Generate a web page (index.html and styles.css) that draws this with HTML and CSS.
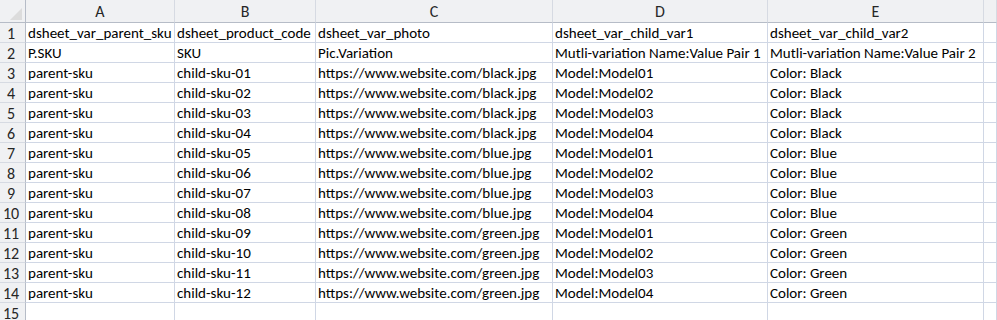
FILE: index.html
```html
<!DOCTYPE html>
<html>
<head>
<meta charset="utf-8">
<link rel="stylesheet" href="styles.css">
</head>
<body>
<div class="sheet">
  <div class="corner"><span class="tri"></span></div>
  <div class="ch">A</div><div class="ch">B</div><div class="ch">C</div><div class="ch">D</div><div class="ch">E</div><div class="ch last"></div>

  <div class="rh">1</div><div class="c">dsheet_var_parent_sku</div><div class="c">dsheet_product_code</div><div class="c">dsheet_var_photo</div><div class="c">dsheet_var_child_var1</div><div class="c">dsheet_var_child_var2</div><div class="c"></div>
  <div class="rh">2</div><div class="c">P.SKU</div><div class="c">SKU</div><div class="c">Pic.Variation</div><div class="c">Mutli-variation Name:Value Pair 1</div><div class="c">Mutli-variation Name:Value Pair 2</div><div class="c"></div>
  <div class="rh">3</div><div class="c">parent-sku</div><div class="c">child-sku-01</div><div class="c">https://www.website.com/black.jpg</div><div class="c">Model:Model01</div><div class="c">Color: Black</div><div class="c"></div>
  <div class="rh">4</div><div class="c">parent-sku</div><div class="c">child-sku-02</div><div class="c">https://www.website.com/black.jpg</div><div class="c">Model:Model02</div><div class="c">Color: Black</div><div class="c"></div>
  <div class="rh">5</div><div class="c">parent-sku</div><div class="c">child-sku-03</div><div class="c">https://www.website.com/black.jpg</div><div class="c">Model:Model03</div><div class="c">Color: Black</div><div class="c"></div>
  <div class="rh">6</div><div class="c">parent-sku</div><div class="c">child-sku-04</div><div class="c">https://www.website.com/black.jpg</div><div class="c">Model:Model04</div><div class="c">Color: Black</div><div class="c"></div>
  <div class="rh">7</div><div class="c">parent-sku</div><div class="c">child-sku-05</div><div class="c">https://www.website.com/blue.jpg</div><div class="c">Model:Model01</div><div class="c">Color: Blue</div><div class="c"></div>
  <div class="rh">8</div><div class="c">parent-sku</div><div class="c">child-sku-06</div><div class="c">https://www.website.com/blue.jpg</div><div class="c">Model:Model02</div><div class="c">Color: Blue</div><div class="c"></div>
  <div class="rh">9</div><div class="c">parent-sku</div><div class="c">child-sku-07</div><div class="c">https://www.website.com/blue.jpg</div><div class="c">Model:Model03</div><div class="c">Color: Blue</div><div class="c"></div>
  <div class="rh">10</div><div class="c">parent-sku</div><div class="c">child-sku-08</div><div class="c">https://www.website.com/blue.jpg</div><div class="c">Model:Model04</div><div class="c">Color: Blue</div><div class="c"></div>
  <div class="rh">11</div><div class="c">parent-sku</div><div class="c">child-sku-09</div><div class="c">https://www.website.com/green.jpg</div><div class="c">Model:Model01</div><div class="c">Color: Green</div><div class="c"></div>
  <div class="rh">12</div><div class="c">parent-sku</div><div class="c">child-sku-10</div><div class="c">https://www.website.com/green.jpg</div><div class="c">Model:Model02</div><div class="c">Color: Green</div><div class="c"></div>
  <div class="rh">13</div><div class="c">parent-sku</div><div class="c">child-sku-11</div><div class="c">https://www.website.com/green.jpg</div><div class="c">Model:Model03</div><div class="c">Color: Green</div><div class="c"></div>
  <div class="rh">14</div><div class="c">parent-sku</div><div class="c">child-sku-12</div><div class="c">https://www.website.com/green.jpg</div><div class="c">Model:Model04</div><div class="c">Color: Green</div><div class="c"></div>
  <div class="rh">15</div><div class="c"></div><div class="c"></div><div class="c"></div><div class="c"></div><div class="c"></div><div class="c"></div>
</div>
</body>
</html>
```
FILE: styles.css
```css
html, body {
  margin: 0;
  padding: 0;
  background: #ffffff;
  overflow: hidden;
}
.sheet {
  display: grid;
  grid-template-columns: 26px 149px 141px 237px 215px 216px 1fr;
  grid-template-rows: 23px repeat(15, 20px);
  width: 997px;
  font-family: Carlito, Lato, "Liberation Sans", sans-serif;
  font-size: 15px;
  color: #000;
}
.sheet > div {
  box-sizing: border-box;
  border-right: 1px solid #d0d7e5;
  border-bottom: 1px solid #d0d7e5;
  white-space: nowrap;
  overflow: hidden;
  display: flex;
  align-items: center;
}
.corner {
  background: #f0f1f3;
  justify-content: flex-end;
  align-items: flex-end !important;
  padding: 0 3px 2px 0;
  border-color: #b6bcc7 !important;
}
.tri {
  width: 0;
  height: 0;
  border-left: 12px solid transparent;
  border-bottom: 12px solid #dcdcdc;
}
.sheet > .ch {
  background: #f0f1f3;
  justify-content: center;
  border-right-color: #d6dae2;
  border-bottom-color: #b6bcc7;
  color: #262626;
  font-size: 16px;
}
.sheet > .rh {
  background: #f0f1f3;
  justify-content: center;
  padding-right: 3px;
  border-right-color: #b6bcc7;
  border-bottom-color: #d6dae2;
  color: #262626;
  font-size: 16px;
  align-items: flex-start;
  padding-top: 1px;
}
.sheet > .c {
  padding-left: 2px;
}
```
